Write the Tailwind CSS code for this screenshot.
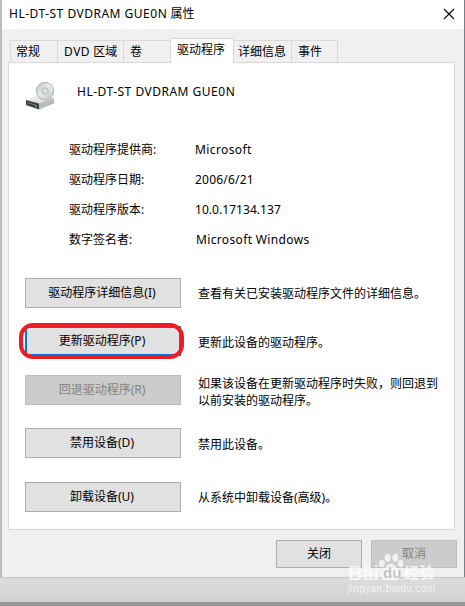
<!DOCTYPE html>
<html lang="zh-CN">
<head>
  <meta charset="UTF-8" />
  <meta name="viewport" content="width=device-width, initial-scale=1.0" />
  <title>HL-DT-ST DVDRAM GUE0N 属性</title>
  <script src="https://cdn.jsdelivr.net/npm/@tailwindcss/browser@4"></script>
</head>
<body class="relative w-[465px] h-[606px] overflow-hidden bg-[#d8d9d9] text-black text-[12px] leading-4 font-['Noto_Sans','Noto_Sans_CJK_SC',sans-serif]">
  <div class="h-[577px] bg-[#f0f0f0] border-l-2 border-l-[#bcbcbc] border-r border-r-[#718089]">
    <!-- title bar -->
    <header class="h-[29px] bg-white flex items-center justify-between pl-[7px] pr-[9px] pb-0.5">
      <h1><span class="tracking-[0.5px]">HL-DT-ST DVDRAM GUE0N</span> 属性</h1>
      <svg class="w-3 h-3" viewBox="0 0 12 12" fill="none" stroke="#000" stroke-width="1.1"><path d="M1 1l10 10M11 1L1 11" /></svg>
    </header>

    <!-- tabs -->
    <nav class="h-[34px] flex items-end pl-[8px] pt-[9px]">
      <div class="w-[47px] h-[23px] border border-r-0 border-[#d9d9d9] pl-[5px] pt-[3px]">常规</div>
      <div class="w-[66px] h-[23px] border border-r-0 border-[#d9d9d9] pl-[6px] pt-[3px] whitespace-nowrap"><span class="tracking-[0.5px]">DVD</span> 区域</div>
      <div class="w-[47px] h-[23px] border border-r-0 border-[#d9d9d9] pl-[6px] pt-[3px]">卷</div>
      <div class="relative z-10 w-[64px] h-[25px] bg-white border border-b-0 border-[#d9d9d9] pl-[6px] pt-[3px] whitespace-nowrap">驱动程序</div>
      <div class="w-[57px] h-[23px] border border-x-0 border-[#d9d9d9] pl-[4px] pt-[3px] whitespace-nowrap">详细信息</div>
      <div class="w-[47px] h-[23px] border border-[#d9d9d9] pl-[6px] pt-[3px]">事件</div>
    </nav>

    <!-- driver page -->
    <main class="-mt-px ml-[6px] w-[447px] h-[468px] bg-white border border-[#d9d9d9]">
      <div class="flex pl-4 pt-[17px] h-[79px]">
        <svg class="w-[32px] h-[32px] shrink-0" viewBox="0 0 32 32">
          <defs>
            <linearGradient id="top" x1="0" y1="0" x2="1" y2="1"><stop offset="0" stop-color="#f4f4f4" /><stop offset="1" stop-color="#d3d4d5" /></linearGradient>
            <linearGradient id="disc" x1="0" y1="0" x2="1" y2="1"><stop offset="0" stop-color="#b9bdbf" /><stop offset=".45" stop-color="#e6ebeb" /><stop offset="1" stop-color="#bcc6c4" /></linearGradient>
          </defs>
          <path d="M1 20l12-5 16 3-15 6z" fill="url(#top)" />
          <path d="M1 20l13 3.500v6L1 25z" fill="#3b3e40" />
          <path d="M14 23.500l15-5.500v5.500l-15 6z" fill="#b9babb" />
          <path d="M2 22.500l10 3" stroke="#777" />
          <circle cx="11" cy="26.500" r="1" fill="#31c52e" />
          <circle cx="20" cy="11" r="8.700" fill="url(#disc)" stroke="#aeb3b4" />
          <path d="M20 11l6.500-4 1.500 4z" fill="#d2eae4" />
          <circle cx="20" cy="11" r="3.300" fill="#dfe3e4" stroke="#a9afb1" stroke-width=".8" />
          <circle cx="20" cy="11" r="1.400" fill="#fff" stroke="#a0a6a8" stroke-width=".5" />
        </svg>
        <p class="ml-5 pt-[4px] tracking-[0.5px]">HL-DT-ST DVDRAM GUE0N</p>
      </div>

      <dl class="grid grid-cols-[126px_1fr] auto-rows-[30px] pl-[60px] h-[136px]">
        <dt>驱动程序提供商:</dt><dd class="tracking-[0.4px]">Microsoft</dd>
        <dt>驱动程序日期:</dt><dd class="tracking-[0.2px]">2006/6/21</dd>
        <dt>驱动程序版本:</dt><dd class="tracking-[0.05px]">10.0.17134.137</dd>
        <dt>数字签名者:</dt><dd class="pl-px tracking-[0.35px]">Microsoft Windows</dd>
      </dl>

      <div class="pl-4">
        <div class="flex h-[48px]">
          <button class="w-[156px] h-[30px] shrink-0 bg-[#e1e1e1] border border-[#adadad] pr-0.5">驱动程序详细信息(I)</button>
          <p class="ml-[17px] pt-[8px] whitespace-nowrap">查看有关已安装驱动程序文件的详细信息。</p>
        </div>
        <div class="flex h-[49px]">
          <div class="relative w-[156px] h-[30px] shrink-0">
            <button class="w-full h-full bg-[#e1e1e1] border-2 border-[#0078d7] pr-0.5">更新驱动程序(P)</button>
            <div class="absolute -left-[6px] -top-[3px] w-[165px] h-[36px] border-4 border-[#ec1c24] rounded-[14px]"></div>
          </div>
          <p class="ml-[17px] pt-[9px]">更新此设备的驱动程序。</p>
        </div>
        <div class="flex h-[53px]">
          <button class="w-[156px] h-[30px] shrink-0 bg-[#cccccc] border border-[#bfbfbf] text-[#838383] pr-0.5" disabled>回退驱动程序(R)</button>
          <p class="ml-[17px] leading-[17px] whitespace-nowrap">如果该设备在更新驱动程序时失败，则回退到<br />以前安装的驱动程序。</p>
        </div>
        <div class="flex h-[54px]">
          <button class="w-[156px] h-[30px] shrink-0 bg-[#e1e1e1] border border-[#adadad] pr-0.5 pb-px">禁用设备(D)</button>
          <p class="ml-[17px] pt-[9px]">禁用此设备。</p>
        </div>
        <div class="flex h-[30px]">
          <button class="w-[156px] h-[30px] shrink-0 bg-[#e1e1e1] border border-[#adadad] pr-0.5">卸载设备(U)</button>
          <p class="ml-[17px] pt-[8px]">从系统中卸载设备(高级)。</p>
        </div>
      </div>
    </main>

    <footer class="flex justify-end gap-[9px] pt-[10px] pr-[7px]">
      <button class="w-[86px] h-[28px] bg-[#e1e1e1] border border-[#adadad]">关闭</button>
      <button class="w-[86px] h-[28px] bg-[#cccccc] border border-[#bfbfbf] text-[#838383]" disabled>取消</button>
    </footer>
  </div>

  <!-- desktop edge -->
  <div class="h-[25px] border-t border-[#c6c6c6] bg-linear-to-b from-[#dcdddd] to-[#d1d3d2]"></div>
  <div class="h-1 bg-[#969696]"></div>

  <!-- watermark -->
  <div class="absolute left-[348px] top-[552px] w-[92px] text-white/75 font-['Liberation_Sans','Noto_Sans_CJK_SC',sans-serif]">
    <svg class="absolute left-[30px] top-px w-[26px] h-[28px]" viewBox="0 0 26 29" fill="#fff" fill-opacity=".75">
      <ellipse cx="3.500" cy="11" rx="3" ry="4" />
      <ellipse cx="9.500" cy="5" rx="3" ry="4.200" />
      <ellipse cx="17.500" cy="5" rx="3" ry="4.200" />
      <ellipse cx="23" cy="11" rx="2.700" ry="4" />
      <path d="M13 11c4 0 5 4 8 7 3 4 2 10-3 10H7c-5 0-6-6-2-10 3-3 4-7 8-7z" />
    </svg>
    <div class="relative flex items-center h-[22px] mt-[14px] -top-1 leading-[22px] whitespace-nowrap">
      <span class="w-[35px] text-[20px] font-bold">Bai</span>
      <span class="w-[18px] text-[15px] font-bold text-[#c4c5c5]">du</span>
      <span class="ml-[3px] text-[15px] font-bold">经验</span>
    </div>
    <div class="-mt-[4px] text-[10px] leading-[10px] tracking-[0.4px] whitespace-nowrap">jingyan.baidu.com</div>
  </div>
</body>
</html>
